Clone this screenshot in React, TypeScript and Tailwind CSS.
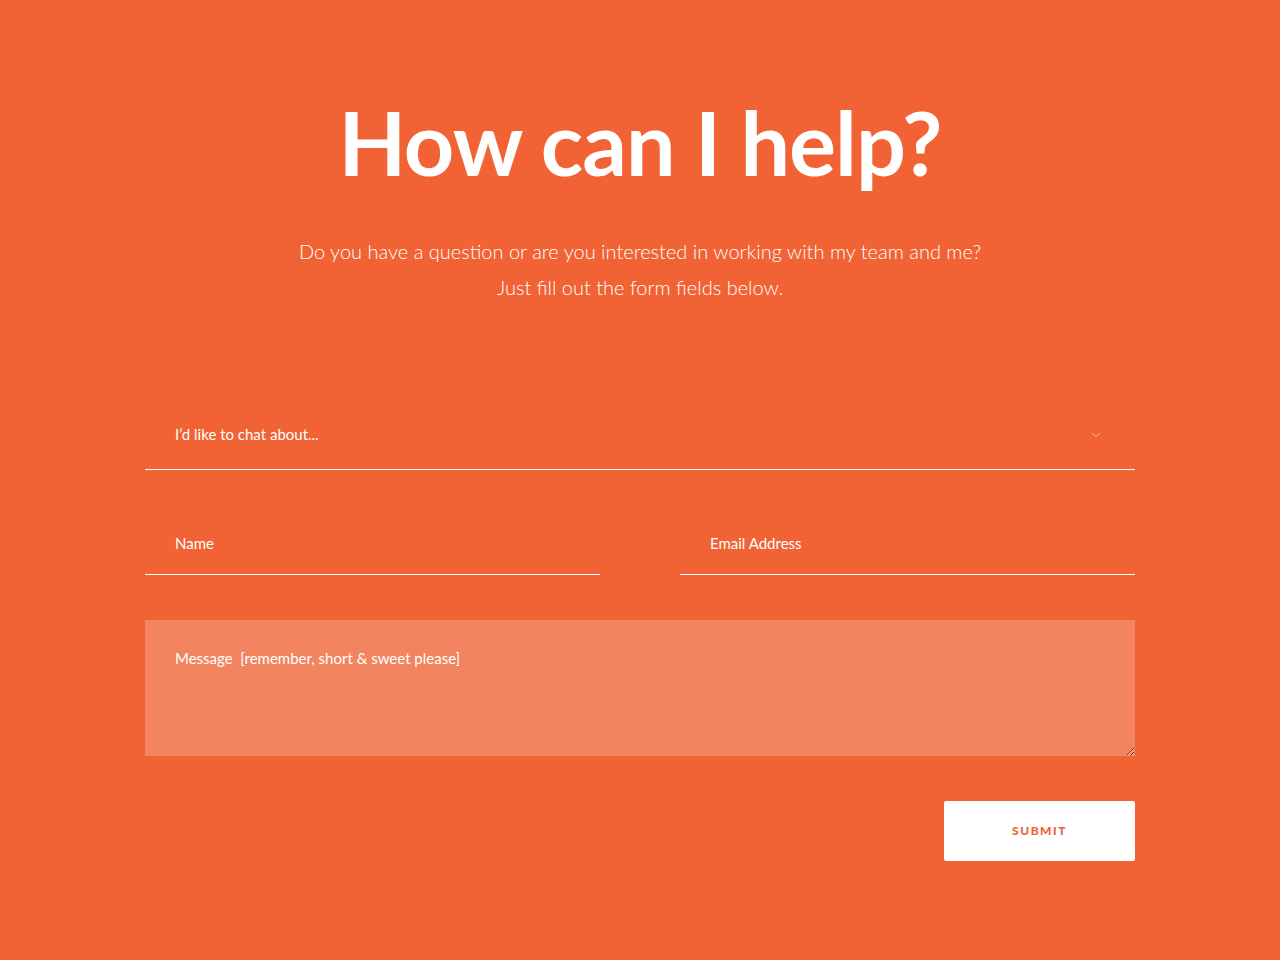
import { ChevronDown } from 'lucide-react'

export default function App() {
  return (
    <div className="min-h-[960px] w-full bg-[#f16334] font-['Lato',sans-serif] text-white">
      <div className="mx-auto w-[990px] pt-[90px]">
        {/* Heading */}
        <h1 className="text-center text-[88px] font-bold leading-[104px] tracking-[-1px]">How can I help?</h1>
        <p className="mt-[39px] text-center text-[20px] font-light leading-[36px]">
          Do you have a question or are you interested in working with my team and me?
          <br />
          Just fill out the form fields below.
        </p>

        {/* Form */}
        <form className="mt-[95px]" onSubmit={(e) => e.preventDefault()}>
          <div className="flex h-[70px] items-center justify-between border-b border-white px-[30px]">
            <span className="text-[15px]">I’d like to chat about...</span>
            <ChevronDown className="mr-[2px] h-[14px] w-[14px] text-[#fbc3ab]" strokeWidth={1.5} />
          </div>

          <div className="mt-[35px] grid grid-cols-2 gap-[80px]">
            <input
              className="h-[70px] border-b border-white bg-transparent px-[30px] pt-[6px] text-[15px] text-white outline-none placeholder:text-white"
              placeholder="Name"
            />
            <input
              className="h-[70px] border-b border-white bg-transparent px-[30px] pt-[6px] text-[15px] text-white outline-none placeholder:text-white"
              placeholder="Email Address"
            />
          </div>

          <textarea
            className="mt-[45px] block h-[136px] w-full bg-[#f38460] px-[30px] py-[27px] text-[15px] text-white outline-none placeholder:text-white"
            placeholder="Message  [remember, short & sweet please]"
          />

          <div className="mt-[45px] flex justify-end">
            <button
              type="submit"
              className="h-[60px] w-[191px] rounded-[2px] bg-white text-[12px] font-black tracking-[1.5px] text-[#f16334]"
            >
              SUBMIT
            </button>
          </div>
        </form>
      </div>
    </div>
  )
}
